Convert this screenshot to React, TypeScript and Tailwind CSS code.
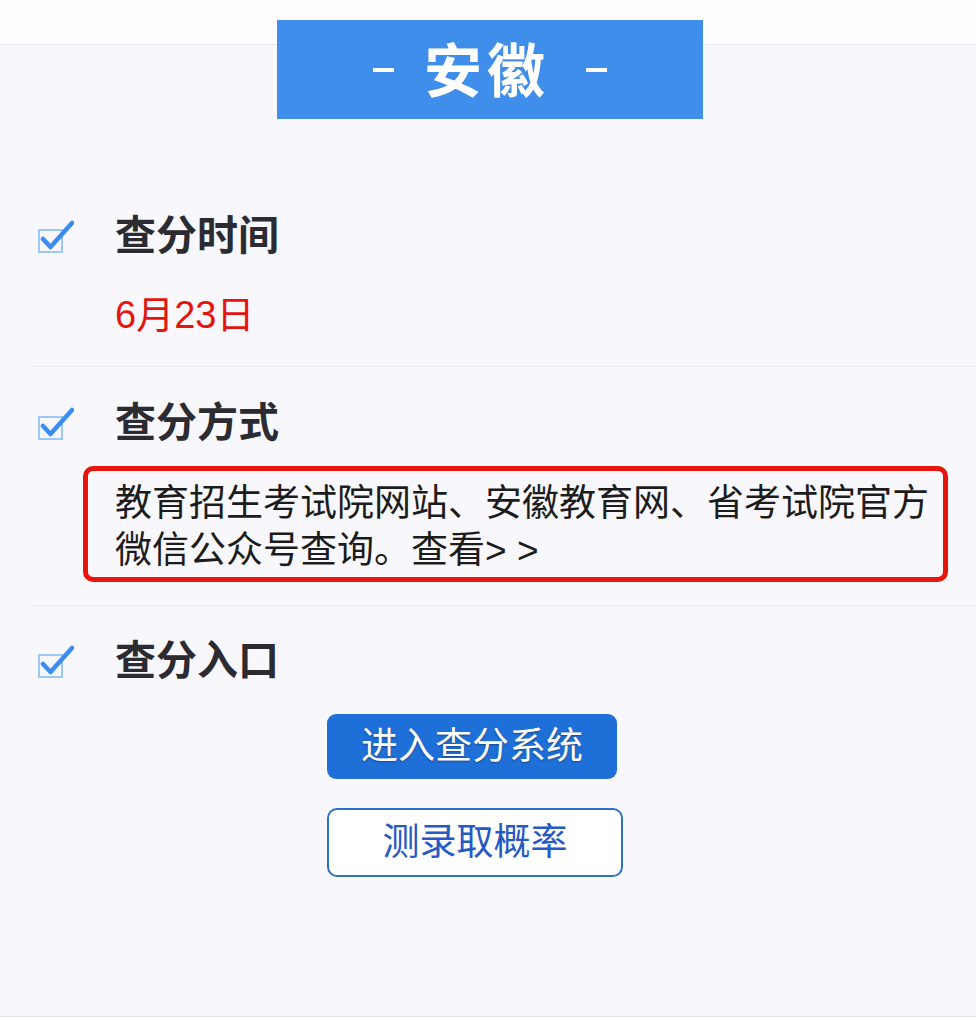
import React from 'react';

// ─── Check icon ───────────────────────────────────────────────

function CheckBox() {
  return (
    <svg width="36" height="33" viewBox="0 0 36 33" className="shrink-0">
      <rect x="1" y="10" width="23" height="22" fill="none" stroke="#9cc8f4" strokeWidth="2" />
      <path d="M5 19 L12.5 27 L34 3" fill="none" stroke="#3b8df0" strokeWidth="4.5" strokeLinecap="round" strokeLinejoin="round" />
    </svg>
  );
}

function Heading({ children, className = '' }: { children: React.ReactNode; className?: string }) {
  return (
    <div className={`flex items-center ${className}`}>
      <CheckBox />
      <h2 className="ml-[41px] text-[41px] leading-[48px] font-bold text-[#2b2b31]">{children}</h2>
    </div>
  );
}

export default function App() {
  return (
    <div
      className="w-full h-[1022px] flex flex-col bg-white overflow-hidden"
      style={{ fontFamily: '"Liberation Sans", "Noto Sans CJK SC", sans-serif' }}
    >
      {/* Top strip */}
      <div className="h-[45px] shrink-0 bg-[#fdfdfe] border-b border-[#e6e6ec]" />

      <div className="flex-1 flex flex-col bg-[#f8f8fc] border-b border-[#e2e2e8]">
        {/* Province banner */}
        <div className="-mt-[25px] w-[426px] h-[99px] bg-[#3f8eec] flex items-center justify-center text-white ml-[277px]">
          <span className="w-[21px] h-[4px] bg-white" />
          <span className="ml-[30px] mr-[36px] text-[58px] leading-none font-bold tracking-[5px] mt-[4px]">安徽</span>
          <span className="w-[21px] h-[4px] bg-white" />
        </div>

        {/* 查分时间 */}
        <div className="pl-[38px]">
          <Heading className="mt-[93px]">查分时间</Heading>
          <div className="ml-[77px] mt-[31px] text-[38px] leading-[48px] text-[#e5150e]">6月23日</div>
        </div>

        <div className="ml-[30px] mt-[27px] h-px bg-[#ececf2]" />

        {/* 查分方式 */}
        <div className="pl-[38px]">
          <Heading className="mt-[32px]">查分方式</Heading>
        </div>
        <div className="ml-[83px] mr-[28px] mt-[19px] border-[5px] border-[#e8150d] rounded-[10px] pl-[27px] pr-[7px] pt-[9px] pb-[3px] text-[37px] leading-[47px] text-[#1c1c1c]">
          教育招生考试院网站、安徽教育网、省考试院官方微信公众号查询。查看&gt; &gt;
        </div>

        <div className="ml-[30px] mt-[23px] h-px bg-[#ececf2]" />

        {/* 查分入口 */}
        <div className="pl-[38px]">
          <Heading className="mt-[31px]">查分入口</Heading>
        </div>
        <div className="ml-[327px] flex flex-col items-start">
          <button className="mt-[29px] w-[290px] h-[65px] rounded-[9px] bg-[#1f6fd8] text-white text-[37px] leading-none [text-shadow:0_1px_2px_rgba(0,0,0,0.35)]">
            进入查分系统
          </button>
          <button className="mt-[29px] w-[296px] h-[69px] rounded-[10px] bg-white border-2 border-[#2f6fc9] text-[#2559c4] text-[37px] leading-none">
            测录取概率
          </button>
        </div>
      </div>

      {/* Bottom strip */}
      <div className="h-[5px] shrink-0 bg-white" />
    </div>
  );
}
